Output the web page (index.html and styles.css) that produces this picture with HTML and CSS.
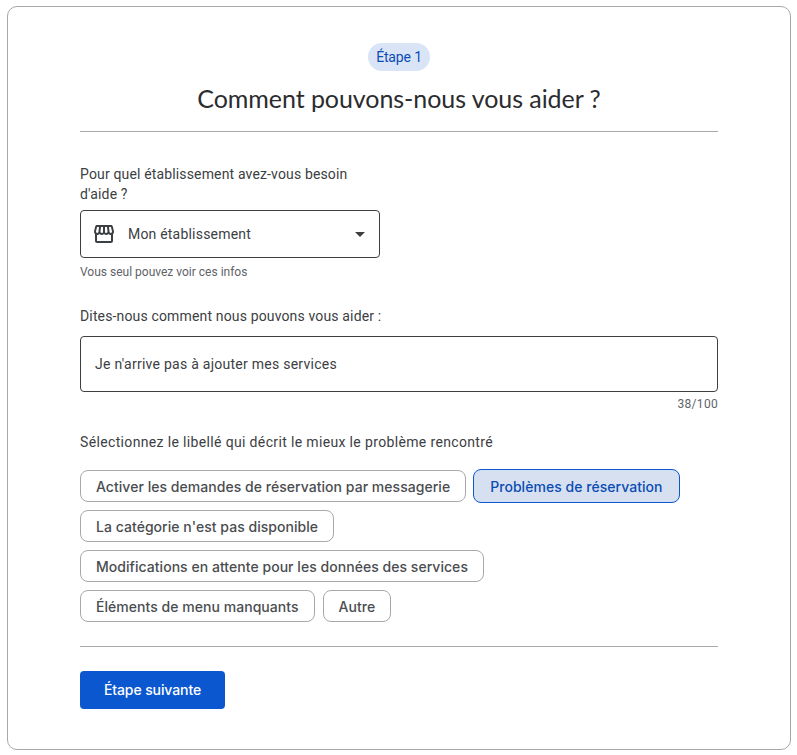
FILE: index.html
```html
<!DOCTYPE html>
<html lang="fr">
<head>
<meta charset="UTF-8">
<meta name="viewport" content="width=device-width, initial-scale=1.0">
<title>Comment pouvons-nous vous aider ?</title>
<link rel="stylesheet" href="styles.css">
</head>
<body>
<div class="card">
<div class="head">
<span class="step">Étape 1</span>
<h1>Comment pouvons-nous vous aider ?</h1>
</div>
<hr class="rule">
<label class="label biz-label">Pour quel établissement avez-vous besoin d'aide ?</label>
<div class="select">
<svg class="store" width="24" height="24" viewBox="0 0 24 24" fill="#3c4043"><path d="M21.9 8.89l-1.05-4.37c-.22-.9-1-1.52-1.91-1.52H5.05c-.9 0-1.69.63-1.9 1.52L2.1 8.89c-.24 1.02-.02 2.06.62 2.88.08.11.19.19.28.29V19c0 1.1.9 2 2 2h14c1.1 0 2-.9 2-2v-6.94c.09-.09.2-.18.28-.28.64-.82.87-1.87.62-2.89zm-2.99-3.9l1.05 4.37c.1.42.01.84-.25 1.17-.14.18-.44.47-.94.47-.61 0-1.14-.49-1.21-1.14L16.98 5l1.93-.01zM13 5h1.96l.54 4.52c.05.39-.07.78-.33 1.07-.22.26-.54.41-.95.41-.67 0-1.22-.59-1.22-1.31V5zM8.49 9.52L9.04 5H11v4.69c0 .72-.55 1.31-1.29 1.31-.34 0-.65-.15-.89-.41-.25-.29-.37-.68-.33-1.07zm-4.45-.16L5.05 5h1.97l-.58 4.86c-.08.65-.6 1.14-1.21 1.14-.49 0-.8-.29-.93-.47-.27-.32-.36-.75-.26-1.17zM5 19v-6.03c.08.01.15.03.23.03.87 0 1.66-.36 2.24-.95.6.6 1.4.95 2.31.95.87 0 1.65-.36 2.23-.93.59.57 1.39.93 2.29.93.84 0 1.64-.35 2.24-.95.58.59 1.37.95 2.24.95.08 0 .15-.02.23-.03V19H5z"/></svg>
<span class="select-text">Mon établissement</span>
<span class="caret"></span>
</div>
<p class="hint">Vous seul pouvez voir ces infos</p>
<label class="label help-label">Dites-nous comment nous pouvons vous aider :</label>
<div class="field">Je n'arrive pas à ajouter mes services</div>
<div class="counter">38/100</div>
<label class="label tags-label">Sélectionnez le libellé qui décrit le mieux le problème rencontré</label>
<div class="chips">
<button class="chip">Activer les demandes de réservation par messagerie</button>
<button class="chip selected">Problèmes de réservation</button>
<button class="chip">La catégorie n'est pas disponible</button>
<button class="chip">Modifications en attente pour les données des services</button>
<button class="chip">Éléments de menu manquants</button>
<button class="chip">Autre</button>
</div>
<hr class="rule bottom-rule">
<button class="next">Étape suivante</button>
</div>
</body>
</html>
```

FILE: styles.css
```css
* {box-sizing: border-box;margin: 0;padding: 0;}
body {background: #fff;color: #3c4043;font-family: "Roboto", "Liberation Sans", sans-serif;padding: 6px 7px;}
.card {width: 784px;height: 744px;border: 1px solid #a8a8a8;border-radius: 10px;padding: 36px 72px 0;}
.head {display: flex;flex-direction: column;align-items: center;}
.step {height: 28px;line-height: 28px;padding: 0 8px;border-radius: 14px;background: #d9e4f7;color: #0b4cb4;font-size: 14px;letter-spacing: -0.15px;}
h1 {font-family: "Lato", "Roboto", sans-serif;font-weight: 400;font-size: 25px;line-height: 32px;color: #2b2c2e;margin-top: 11px;letter-spacing: -0.06px;}
.rule {border: none;border-top: 1px solid #a8a8a8;}
.head + .rule {margin-top: 17px;}
.label {display: block;font-size: 14px;line-height: 20px;color: #3c4043;letter-spacing: 0.15px;}
.biz-label {width: 300px;margin-top: 32px;}
.select {display: flex;align-items: center;width: 300px;height: 48px;margin-top: 6px;padding: 0 14px 0 11px;border: 1px solid #3c4043;border-radius: 4px;}
.store {flex: none;}
.select-text {flex: 1;margin-left: 12px;font-size: 14px;letter-spacing: 0.2px;color: #3c4043;}
.caret {width: 0;height: 0;border-left: 5px solid transparent;border-right: 5px solid transparent;border-top: 5px solid #3c4043;}
.hint {font-size: 12px;line-height: 16px;margin-top: 6px;color: #5f6368;}
.help-label {margin-top: 26px;}
.field {height: 56px;line-height: 54px;margin-top: 10px;padding: 0 14px;border: 1px solid #3c4043;border-radius: 4px;font-size: 14px;letter-spacing: 0.26px;}
.counter {font-size: 12px;line-height: 16px;margin-top: 4px;text-align: right;color: #5f6368;letter-spacing: 0.3px;}
.label.tags-label {margin-top: 20px;letter-spacing: 0.35px;}
.chips {display: flex;flex-wrap: wrap;gap: 8px;margin-top: 18px;}
.chip {height: 32px;padding: 0 15px;background: #fff;border: 1px solid #a8a8a8;border-radius: 8px;font-family: "Inter", "Roboto", sans-serif;font-size: 14px;font-weight: 500;color: #4a4d50;letter-spacing: 0.04px;}
.chip.selected {height: 34px;margin: -1px 0 -1px -1px;padding: 0 16px;background: #d6e0f0;border-color: #0b57d0;color: #0b4cb4;}
.bottom-rule {margin-top: 24px;}
.next {display: block;width: 145px;height: 38px;margin-top: 24px;padding-bottom: 1px;background: #0b57d0;border: none;border-radius: 4px;color: #fff;font-family: "Inter", "Roboto", sans-serif;font-size: 14px;font-weight: 500;letter-spacing: -0.1px;}
```
